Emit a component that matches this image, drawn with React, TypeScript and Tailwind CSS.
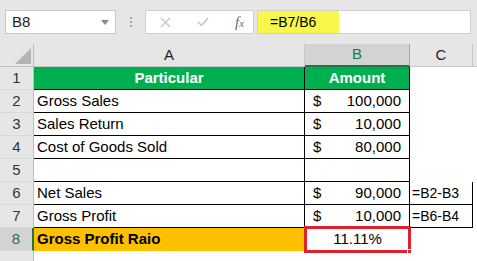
import React from "react";

const rows = [
  { n: "1", a: "Particular", b: null as null | { d: string; v: string; c?: string }, kind: "head" },
  { n: "2", a: "Gross Sales", b: { d: "$", v: "100,000" }, kind: "data" },
  { n: "3", a: "Sales Return", b: { d: "$", v: "10,000" }, kind: "data" },
  { n: "4", a: "Cost of Goods Sold", b: { d: "$", v: "80,000" }, kind: "data" },
  { n: "5", a: "", b: { d: "", v: "" }, kind: "data" },
  { n: "6", a: "Net Sales", b: { d: "$", v: "90,000", c: "=B2-B3" }, kind: "data" },
  { n: "7", a: "Gross Profit", b: { d: "$", v: "10,000", c: "=B6-B4" }, kind: "data" },
];

export default function App() {
  return (
    <div
      className="w-[477px] h-[261px] overflow-hidden bg-[#e6e6e6] text-[15px] text-black"
      style={{ fontFamily: '"Liberation Sans", Arial, sans-serif' }}
    >
      {/* Toolbar */}
      <div className="h-[44px] flex items-start pt-[10px]">
        <div className="ml-[5px] w-[111px] h-[24px] bg-white border border-[#c8c8c8] flex items-center justify-between pl-[6px] pr-[6px]">
          <span className="text-[15px] text-[#222]">B8</span>
          <svg width="8" height="5" viewBox="0 0 8 5"><path d="M0 0 L8 0 L4 5 Z" fill="#8a8a8a" /></svg>
        </div>
        <div className="ml-[14px] mt-[7px] flex flex-col gap-[2px]">
          <div className="w-[2px] h-[2px] bg-[#a8a8a8]" />
          <div className="w-[2px] h-[2px] bg-[#a8a8a8]" />
          <div className="w-[2px] h-[2px] bg-[#a8a8a8]" />
        </div>
        <div className="ml-[13px] w-[109px] h-[24px] bg-white border border-[#d0d0d0] flex items-center">
          <svg className="ml-[14px]" width="11" height="11" viewBox="0 0 11 11">
            <path d="M1 1 L10 10 M10 1 L1 10" stroke="#c4c4c4" strokeWidth="1.4" />
          </svg>
          <svg className="ml-[26px]" width="12" height="10" viewBox="0 0 12 10">
            <path d="M1 5 L4.5 8.5 L11 1" stroke="#c4c4c4" strokeWidth="1.5" fill="none" />
          </svg>
          <span
            className="ml-[26px] text-[15px] italic text-[#6a6a6a]"
            style={{ fontFamily: '"Liberation Serif", serif' }}
          >
            f<span className="text-[11px]">x</span>
          </span>
        </div>
        <div className="ml-[3px] w-[214px] h-[24px] bg-white border border-[#d0d0d0] flex">
          <div className="w-[81px] h-full bg-[#f8f84a] flex items-center pl-[12px] text-[14px]">=B7/B6</div>
        </div>
      </div>

      {/* Grid */}
      <div className="grid grid-cols-[34px_271px_105px_63px_4px] bg-white">
        {/* Header row */}
        <div className="h-[23px] bg-[#e6e6e6] border-r border-b border-[#bdbdbd] relative">
          <svg className="absolute left-[15px] top-[4px]" width="16" height="16" viewBox="0 0 16 16">
            <path d="M16 0 L16 16 L0 16 Z" fill="#b4b4b4" />
          </svg>
        </div>
        <div className="h-[23px] bg-[#e6e6e6] border-r border-b border-[#c8c8c8] flex items-center justify-center text-[#222]">A</div>
        <div className="h-[23px] bg-[#d3d3d3] border-r border-[#ababab] border-b-2 border-b-[#217346] flex items-center justify-center text-[#217346]">B</div>
        <div className="h-[23px] bg-[#e6e6e6] border-r border-b border-[#c8c8c8] flex items-center justify-center text-[#222]">C</div>
        <div className="h-[23px] bg-[#e6e6e6] border-b border-[#c8c8c8]" />

        {rows.map((r) => (
          <React.Fragment key={r.n}>
            <div className="h-[23px] bg-[#e6e6e6] border-r border-b border-r-[#bdbdbd] border-b-[#d9d9d9] flex items-center justify-center text-[#333]">
              {r.n}
            </div>
            {r.kind === "head" ? (
              <>
                <div className="h-[23px] bg-[#00b050] border-r border-b border-black flex items-center justify-center text-white font-bold">
                  Particular
                </div>
                <div className="h-[23px] bg-[#00b050] border-r border-b border-black flex items-center justify-center text-white font-bold">
                  Amount
                </div>
                <div className="h-[23px]" />
              </>
            ) : (
              <>
                <div className="h-[23px] border-r border-b border-black flex items-center pl-[3px]">{r.a}</div>
                <div className="h-[23px] border-r border-b border-black flex items-center justify-between pl-[8px] pr-[8px]">
                  <span>{r.b?.d}</span>
                  <span>{r.b?.v}</span>
                </div>
                {r.b?.c ? (
                  <div className="h-[23px] border-r border-b border-black flex items-center pl-[2px] text-[14px]">{r.b.c}</div>
                ) : (
                  <div className="h-[23px] border-b border-transparent" />
                )}
              </>
            )}
            <div className="h-[23px]" />
          </React.Fragment>
        ))}

        {/* Row 8 */}
        <div className="h-[23px] bg-[#d3d3d3] border-r-2 border-r-[#217346] border-b border-b-[#d9d9d9] flex items-center justify-center text-[#217346]">8</div>
        <div className="h-[23px] bg-[#ffc000] flex items-center pl-[3px] font-bold">Gross Profit Raio</div>
        <div className="h-[23px] relative">
          <div className="absolute left-[-1px] top-[-2px] w-[107px] h-[27px] border-[3px] border-[#e0202a] flex items-center justify-center bg-white">
            11.11%
          </div>
          <div className="absolute left-[102px] top-[21px] w-[5px] h-[5px] bg-[#e0202a] border border-white" />
        </div>
        <div className="h-[23px]" />
        <div className="h-[23px]" />

        {/* Row 9 */}
        <div className="h-[23px] bg-[#e6e6e6] border-r border-r-[#bdbdbd] flex items-start justify-center pt-[4px] text-[#333]">9</div>
        <div className="h-[23px]" />
        <div className="h-[23px]" />
        <div className="h-[23px]" />
        <div className="h-[23px]" />
      </div>
    </div>
  );
}
